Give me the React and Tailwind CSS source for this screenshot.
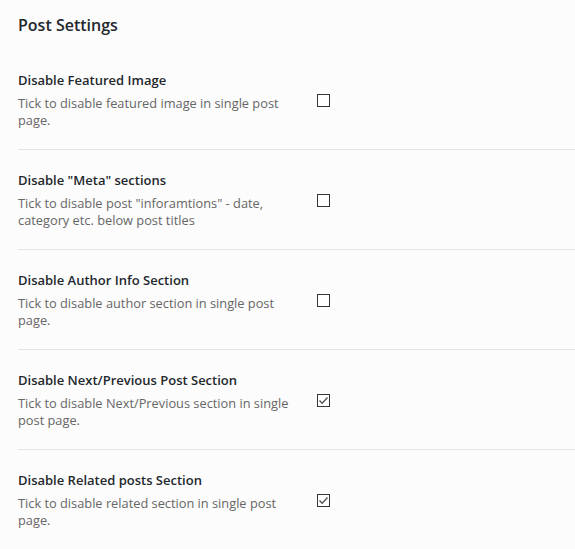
import React, { useState } from 'react';

const initial = [
  { id: 'featured', label: 'Disable Featured Image', desc: 'Tick to disable featured image in single post page.', checked: false },
  { id: 'meta', label: 'Disable "Meta" sections', desc: 'Tick to disable post "inforamtions" - date, category etc. below post titles', checked: false },
  { id: 'author', label: 'Disable Author Info Section', desc: 'Tick to disable author section in single post page.', checked: false },
  { id: 'nav', label: 'Disable Next/Previous Post Section', desc: 'Tick to disable Next/Previous section in single post page.', checked: true },
  { id: 'related', label: 'Disable Related posts Section', desc: 'Tick to disable related section in single post page.', checked: true },
];

function Tick({ checked, onChange }) {
  return (
    <button
      type="button"
      onClick={onChange}
      className="w-[13px] h-[13px] border border-[#32373c] bg-white flex items-center justify-center shrink-0"
    >
      {checked && (
        <svg width="11" height="11" viewBox="0 0 11 11">
          <path d="M1.5 5.5 L4.2 8.2 L9.5 2.5" fill="none" stroke="#555" strokeWidth="1.4" />
        </svg>
      )}
    </button>
  );
}

export default function App() {
  const [opts, setOpts] = useState(initial);
  const toggle = (id) => setOpts(o => o.map(x => x.id === id ? { ...x, checked: !x.checked } : x));

  return (
    <div className="min-h-screen bg-[#fcfcfc] pl-[18px] font-['Open_Sans',sans-serif] overflow-hidden">
      <h2 className="pt-[14px] h-[50px] text-[16px] leading-[22px] font-semibold text-[#23282d]">Post Settings</h2>
      {opts.map(o => (
        <div key={o.id} className="flex h-[100px] border-b border-[#e5e5e5] pt-[20px]">
          <div className="w-[280px]">
            <div className="text-[13px] leading-[20px] font-semibold text-[#23282d]">{o.label}</div>
            <p className="mt-[5px] text-[12.8px] leading-[17px] text-[#666]">{o.desc}</p>
          </div>
          <div className="ml-[19px] mt-[24px]">
            <Tick checked={o.checked} onChange={() => toggle(o.id)} />
          </div>
        </div>
      ))}
    </div>
  );
}
